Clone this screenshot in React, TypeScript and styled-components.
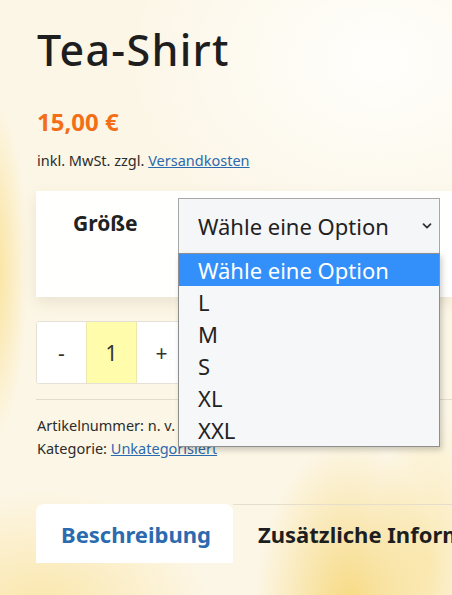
import React from 'react'
import styled, { createGlobalStyle } from 'styled-components';

const GlobalStyle = createGlobalStyle`
  html, body {
    margin: 0;
    padding: 0;
  }
  body {
    width: 452px;
    height: 595px;
    overflow: hidden;
    font-family: "Noto Sans", "Open Sans", sans-serif;
    color: #222;
    background-color: #fcf6e6;
    background-image:
      radial-gradient(ellipse 260px 200px at 380px 60px, rgba(255,255,253,0.95), rgba(255,255,253,0) 100%),
      radial-gradient(ellipse 95px 170px at 350px 610px, rgba(246,212,110,0.85), rgba(246,212,110,0) 100%),
      radial-gradient(ellipse 60px 150px at 430px 560px, rgba(250,226,150,0.6), rgba(250,226,150,0) 100%),
      radial-gradient(ellipse 36px 170px at -8px 270px, rgba(250,222,135,0.85), rgba(250,222,135,0) 100%),
      radial-gradient(ellipse 170px 120px at 40px 610px, rgba(250,224,145,0.7), rgba(250,224,145,0) 100%);
  }
`;

const options = ['Wähle eine Option', 'L', 'M', 'S', 'XL', 'XXL'];

const Page = styled.div`
  padding: 22px 0 0 37px;
`;

const Title = styled.h1`
  margin: 0;
  font-size: 43px;
  font-weight: 500;
  letter-spacing: 1.3px;
  line-height: 56px;
  color: #1e1e1e;
`;

const Price = styled.div`
  margin-top: 28px;
  font-size: 24px;
  font-weight: 700;
  color: #f36f17;
  line-height: 32px;
`;

const TaxNote = styled.p`
  margin: 12px 0 0;
  font-size: 14.5px;
  line-height: 20px;
  color: #2c2c2c;
`;

const Link = styled.a`
  color: #2b6aae;
  text-decoration: underline;
  cursor: pointer;
`;

const VariationCard = styled.div`
  position: relative;
  margin-top: 21px;
  margin-left: -1px;
  height: 106px;
  background: rgba(255, 255, 255, 0.93);
  box-shadow: 0 6px 14px rgba(120, 100, 60, 0.12);
  display: flex;
  align-items: flex-start;
  padding: 7px 0 0 37px;
  box-sizing: border-box;
`;

const Label = styled.label`
  width: 105px;
  padding-top: 11px;
  font-size: 21px;
  font-weight: 700;
  color: #222;
`;

const SelectWrap = styled.div`
  position: relative;
  width: 262px;
`;

const SelectBox = styled.div`
  height: 55px;
  box-sizing: border-box;
  border: 1px solid #a7a7a7;
  border-bottom: none;
  background: #f5f6f8;
  display: flex;
  align-items: center;
  justify-content: space-between;
  padding: 0 6px 0 19px;
  font-size: 22px;
  color: #222;
`;

const Listbox = styled.ul`
  position: absolute;
  top: 55px;
  left: 0;
  width: 262px;
  margin: 0;
  padding: 0;
  list-style: none;
  background: #f6f7f9;
  border: 1px solid #8e8e8e;
  box-sizing: border-box;
  box-shadow: 2px 3px 6px rgba(0, 0, 0, 0.2);
  z-index: 5;
`;

const Option = styled.li<{ $active?: boolean }>`
  height: 32px;
  line-height: 32px;
  padding-left: 19px;
  font-size: 22px;
  background: ${p => (p.$active ? '#3390fb' : 'transparent')};
  color: ${p => (p.$active ? '#fff' : '#222')};
`;

const Quantity = styled.div`
  margin-top: 24px;
  margin-left: -1px;
  display: flex;
  width: max-content;
  border: 1px solid #e6e1d6;
  border-radius: 3px;
  overflow: hidden;
  background: #fff;
`;

const QtyCell = styled.div<{ $value?: boolean }>`
  width: 49px;
  height: 61px;
  display: flex;
  align-items: center;
  justify-content: center;
  font-size: 21px;
  color: #333;
  background: ${p => (p.$value ? '#fffcab' : '#fff')};
  border-left: ${p => (p.$value ? '1px solid #ece8b0' : 'none')};
  border-right: ${p => (p.$value ? '1px solid #ece8b0' : 'none')};
`;

const Divider = styled.hr`
  margin: 15px 0 0 -1px;
  border: none;
  border-top: 1px solid #e4dccb;
`;

const Meta = styled.div`
  margin-top: 14px;
  font-size: 14.5px;
  line-height: 23px;
  color: #2c2c2c;
`;

const Tabs = styled.div`
  margin-top: 44px;
  margin-left: -1px;
  display: flex;
  align-items: flex-start;
  white-space: nowrap;
`;

const Tab = styled.div<{ $active?: boolean }>`
  height: 59px;
  box-sizing: border-box;
  display: flex;
  align-items: center;
  padding: 0 ${p => (p.$active ? '22px 0 25px' : '0 0 25px')};
  font-size: 22px;
  font-weight: 700;
  color: ${p => (p.$active ? '#2b6aae' : '#1e1e1e')};
  background: ${p => (p.$active ? '#fff' : 'transparent')};
  border-radius: ${p => (p.$active ? '8px 8px 0 0' : '0')};
  border-top: ${p => (p.$active ? 'none' : '1px solid #e6ddca')};
  flex: ${p => (p.$active ? '0 0 auto' : '1 1 auto')};
`;

const Chevron = () => (
  <svg width="12" height="12" viewBox="0 0 12 12">
    <path d="M2.5 4.2 L6 7.6 L9.5 4.2" fill="none" stroke="#333" strokeWidth="1.8" strokeLinecap="round" strokeLinejoin="round" />
  </svg>
);

export default function App() {
  return (
    <>
      <GlobalStyle />
      <Page>
        <Title>Tea-Shirt</Title>
        <Price>15,00 €</Price>
        <TaxNote>
          inkl. MwSt. zzgl. <Link>Versandkosten</Link>
        </TaxNote>
        <VariationCard>
          <Label>Größe</Label>
          <SelectWrap>
            <SelectBox>
              <span>Wähle eine Option</span>
              <Chevron />
            </SelectBox>
            <Listbox>
              {options.map((o, i) => (
                <Option key={o} $active={i === 0}>{o}</Option>
              ))}
            </Listbox>
          </SelectWrap>
        </VariationCard>
        <Quantity>
          <QtyCell>-</QtyCell>
          <QtyCell $value>1</QtyCell>
          <QtyCell>+</QtyCell>
        </Quantity>
        <Divider />
        <Meta>
          <div>Artikelnummer: n. v.</div>
          <div>Kategorie: <Link>Unkategorisiert</Link></div>
        </Meta>
        <Tabs>
          <Tab $active>Beschreibung</Tab>
          <Tab>Zusätzliche Informationen</Tab>
        </Tabs>
      </Page>
    </>
  );
}
